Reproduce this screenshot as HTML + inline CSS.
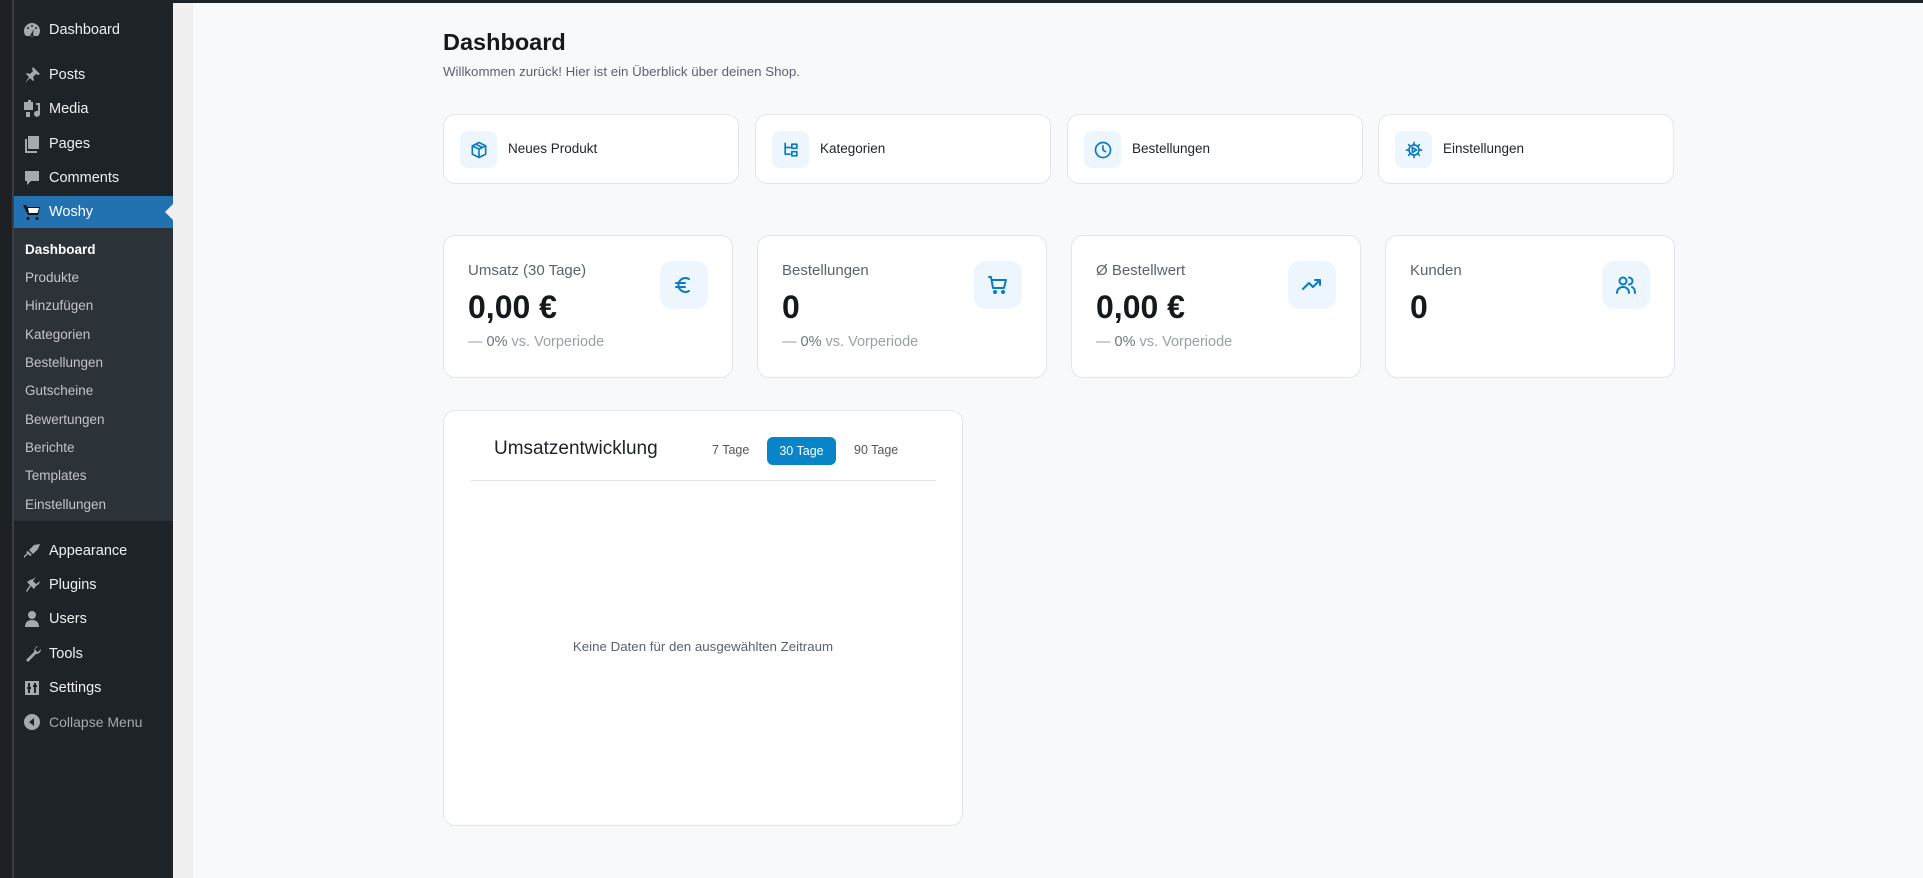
<!DOCTYPE html>
<html><head><meta charset="utf-8"><style>
*{box-sizing:border-box;margin:0;padding:0}
body{width:1923px;height:878px;overflow:hidden;background:#f8f9fa;font-family:"Liberation Sans",Arial,sans-serif;position:relative}
.strip{position:absolute;left:0;top:0;width:12px;height:878px;background:#1e2124}
.bord{position:absolute;left:12px;top:0;width:2px;height:878px;background:#3c4044}
.side{position:absolute;left:14px;top:0;width:159px;height:878px;background:#1d2327}
.gap{position:absolute;left:173px;top:0;width:20px;height:878px;background:#f0f0f1}
.topbar{position:absolute;left:173px;top:0;right:0;height:3px;background:#1d2327}
.mi{position:absolute;left:0;width:159px;height:34px;color:#f0f0f1;font-size:14.5px;display:flex;align-items:center}
.mi svg{position:absolute;left:8px;width:20px;height:20px;fill:#a7aaad}
.mi span{position:absolute;left:35px}
.woshy{background:#2271b1;color:#fff}
.woshy svg{fill:#fff}
.sub{position:absolute;left:0;top:228px;width:159px;height:293px;background:#2c3338}
.si{position:absolute;left:11px;font-size:13.5px;color:#c3c4c7}
.card{position:absolute;background:#fff;border:1px solid #e3e5e8;border-radius:12px}
.qa .ib{position:absolute;left:16px;top:16px;width:37px;height:37px;border-radius:8px;background:#eef6fd;display:flex;align-items:center;justify-content:center}
.qa .t{position:absolute;left:64px;top:26px;font-size:13.5px;color:#1d2327}
.ib svg{width:20px;height:20px;stroke:#0a7bc2;fill:none;stroke-width:2;stroke-linecap:round;stroke-linejoin:round}
.st .lbl{position:absolute;left:24px;top:26px;font-size:15px;color:#5b6270}
.st .val{position:absolute;left:24px;top:53px;font-size:32px;font-weight:700;color:#15181c}
.st .ch{position:absolute;left:24px;top:98px;font-size:14.5px;color:#9aa0a8}
.st .ch b{color:#6b7280;font-weight:500}
.st .bx{position:absolute;right:24px;top:25px;width:48px;height:48px;border-radius:12px;background:#eef6fd;display:flex;align-items:center;justify-content:center}
.bx svg{width:24px;height:24px;stroke:#0a7bc2;fill:none;stroke-width:2;stroke-linecap:round;stroke-linejoin:round}
</style></head><body>
<div class="strip"></div><div class="bord"></div>
<div class="side">
<div class="mi" style="top:13px"><svg viewBox="0 0 20 20"><path d="M10 3a8 8 0 0 0-8 8c0 2 .7 3.7 2 5h12a8 8 0 0 0 2-5 8 8 0 0 0-8-8zm0 2a1 1 0 1 1 0 2 1 1 0 0 1 0-2zM6 7a1 1 0 1 1 0 2 1 1 0 0 1 0-2zm8 0a1 1 0 1 1 0 2 1 1 0 0 1 0-2zm-2 2l-1 5a1.5 1.5 0 1 1-2 0z"/></svg><span>Dashboard</span></div>
<div class="mi" style="top:58px"><svg viewBox="0 0 20 20"><path d="M11 2l7 7-2 1-2-1-3 3 1 3-1 1-3-3-5 5 4-6-3-3 1-1 3 1 3-3-1-2z"/></svg><span>Posts</span></div>
<div class="mi" style="top:92px"><svg viewBox="0 0 20 20"><path d="M2 3h9v8H2zM6 1h3v2H6zm8 3h4v11a3 3 0 1 1-2-3V6h-2zM4 13h4v5H4z"/></svg><span>Media</span></div>
<div class="mi" style="top:127px"><svg viewBox="0 0 20 20"><path d="M6 2h11v13H6zM3 5h2v12h10v2H3z"/></svg><span>Pages</span></div>
<div class="mi" style="top:161px"><svg viewBox="0 0 20 20"><path d="M3 3h14v10H9l-4 4v-4H3z"/></svg><span>Comments</span></div>
<div class="mi woshy" style="top:196px;height:32px"><svg viewBox="0 0 20 20" style="fill:#fff"><path d="M1 3h3l1 2h13l-2 8H6zM6 15a1.5 1.5 0 1 1 0 3 1.5 1.5 0 0 1 0-3zm9 0a1.5 1.5 0 1 1 0 3 1.5 1.5 0 0 1 0-3z" fill="#111"/><path d="M6 6h11l-1.5 5H7z" fill="#fff"/></svg><span>Woshy</span><div style="position:absolute;right:0;top:8px;border:8px solid transparent;border-right-color:#f0f0f1"></div></div>
<div class="sub">
<div class="si" style="top:14px;color:#fff;font-weight:700">Dashboard</div>
<div class="si" style="top:42px">Produkte</div>
<div class="si" style="top:70px">Hinzufügen</div>
<div class="si" style="top:99px">Kategorien</div>
<div class="si" style="top:127px">Bestellungen</div>
<div class="si" style="top:155px">Gutscheine</div>
<div class="si" style="top:184px">Bewertungen</div>
<div class="si" style="top:212px">Berichte</div>
<div class="si" style="top:240px">Templates</div>
<div class="si" style="top:269px">Einstellungen</div>
</div>
<div class="mi" style="top:534px"><svg viewBox="0 0 20 20"><path d="M18 3l-6 1-5 5 4 4 5-5zM6 10l4 4-2 1-2-2-4 4v-2l3-3-1-1z"/></svg><span>Appearance</span></div>
<div class="mi" style="top:568px"><svg viewBox="0 0 20 20"><path d="M14 2l-3 4 3 3 4-3-1 3-3 2-2 3-3-3-4 6-1-1 4-6-3-3 3-2 3-1z"/></svg><span>Plugins</span></div>
<div class="mi" style="top:602px"><svg viewBox="0 0 20 20"><path d="M10 2a4 4 0 1 1 0 8 4 4 0 0 1 0-8zM3 18c0-5 3-7 7-7s7 2 7 7z"/></svg><span>Users</span></div>
<div class="mi" style="top:637px"><svg viewBox="0 0 20 20"><path d="M16 2l-3 3 1 2 2 1 3-3c0 3-2 5-5 5l-8 8-2-2 8-8c0-3 2-6 4-6z"/></svg><span>Tools</span></div>
<div class="mi" style="top:671px"><svg viewBox="0 0 20 20"><path d="M3 3h14v14H3zm3 2v4H5v2h1v4h2v-4h1V9H8V5zm6 0v2h-1v2h1v6h2V9h1V7h-1V5z"/></svg><span>Settings</span></div>
<div class="mi" style="top:705px;color:#a7aaad;font-size:14px"><svg viewBox="0 0 20 20"><path d="M10 2a8 8 0 1 1 0 16 8 8 0 0 1 0-16zm2 4l-5 4 5 4z"/></svg><span>Collapse Menu</span></div>
</div>
<div class="gap"></div><div class="topbar"></div>

<div style="position:absolute;left:443px;top:29px;font-size:23.5px;font-weight:700;color:#15181c">Dashboard</div>
<div style="position:absolute;left:443px;top:64px;font-size:13.3px;color:#5b6270">Willkommen zurück! Hier ist ein Überblick über deinen Shop.</div>

<div class="card qa" style="left:443px;top:114px;width:296px;height:70px"><div class="ib"><svg viewBox="0 0 24 24"><path d="M12 3l8 4v10l-8 4-8-4V7zM4 7l8 4 8-4M12 11v10M8 5l8 4"/></svg></div><div class="t">Neues Produkt</div></div>
<div class="card qa" style="left:755px;top:114px;width:296px;height:70px"><div class="ib"><svg viewBox="0 0 24 24"><path d="M5 4v13h6M5 9h6M13 5h6v5h-6zM13 14h6v5h-6z"/></svg></div><div class="t">Kategorien</div></div>
<div class="card qa" style="left:1067px;top:114px;width:296px;height:70px"><div class="ib"><svg viewBox="0 0 24 24"><circle cx="12" cy="12" r="9"/><path d="M12 7v5l3 2"/></svg></div><div class="t">Bestellungen</div></div>
<div class="card qa" style="left:1378px;top:114px;width:296px;height:70px"><div class="ib"><svg viewBox="0 0 24 24"><circle cx="12" cy="12" r="6"/><path d="M12 3v3M12 18v3M3 12h3M18 12h3M5.6 5.6l2 2M16.4 16.4l2 2M5.6 18.4l2-2M16.4 7.6l2-2M10 9l5 3-5 3z"/></svg></div><div class="t">Einstellungen</div></div>

<div class="card st" style="left:443px;top:235px;width:290px;height:143px"><div class="lbl">Umsatz (30 Tage)</div><div class="val">0,00 €</div><div class="ch">— <b>0%</b> vs. Vorperiode</div><div class="bx"><svg viewBox="0 0 24 24"><path d="M17 6a7 7 0 1 0 0 12M4 10h9M4 14h9"/></svg></div></div>
<div class="card st" style="left:757px;top:235px;width:290px;height:143px"><div class="lbl">Bestellungen</div><div class="val">0</div><div class="ch">— <b>0%</b> vs. Vorperiode</div><div class="bx"><svg viewBox="0 0 24 24"><path d="M3 4h2l2 11h11l2-8H6"/><circle cx="9" cy="19" r="1"/><circle cx="17" cy="19" r="1"/></svg></div></div>
<div class="card st" style="left:1071px;top:235px;width:290px;height:143px"><div class="lbl">Ø Bestellwert</div><div class="val">0,00 €</div><div class="ch">— <b>0%</b> vs. Vorperiode</div><div class="bx"><svg viewBox="0 0 24 24"><path d="M3 16l6-6 4 4 7-7M15 7h5v5"/></svg></div></div>
<div class="card st" style="left:1385px;top:235px;width:290px;height:143px"><div class="lbl">Kunden</div><div class="val">0</div><div class="bx"><svg viewBox="0 0 24 24"><circle cx="9" cy="8" r="3.5"/><path d="M3 20c0-4 3-6 6-6s6 2 6 6M15 4.5a3.5 3.5 0 0 1 0 7M18 14c2 1 3 3 3 6"/></svg></div></div>

<div class="card" style="left:443px;top:410px;width:520px;height:416px">
<div style="position:absolute;left:50px;top:27px;font-size:19px;color:#1d2327;font-weight:500">Umsatzentwicklung</div>
<div style="position:absolute;left:268px;top:32px;font-size:12.5px;color:#50575e">7 Tage</div>
<div style="position:absolute;left:323px;top:26px;width:69px;height:28px;border-radius:6px;background:#0884c8;color:#fff;font-size:12.5px;line-height:28px;text-align:center">30 Tage</div>
<div style="position:absolute;left:410px;top:32px;font-size:12.5px;color:#50575e">90 Tage</div>
<div style="position:absolute;left:26px;top:69px;width:466px;height:1px;background:#e3e5e8"></div>
<div style="position:absolute;left:0;width:518px;top:228px;text-align:center;font-size:13.3px;color:#5b6270">Keine Daten für den ausgewählten Zeitraum</div>
</div>
</body></html>
